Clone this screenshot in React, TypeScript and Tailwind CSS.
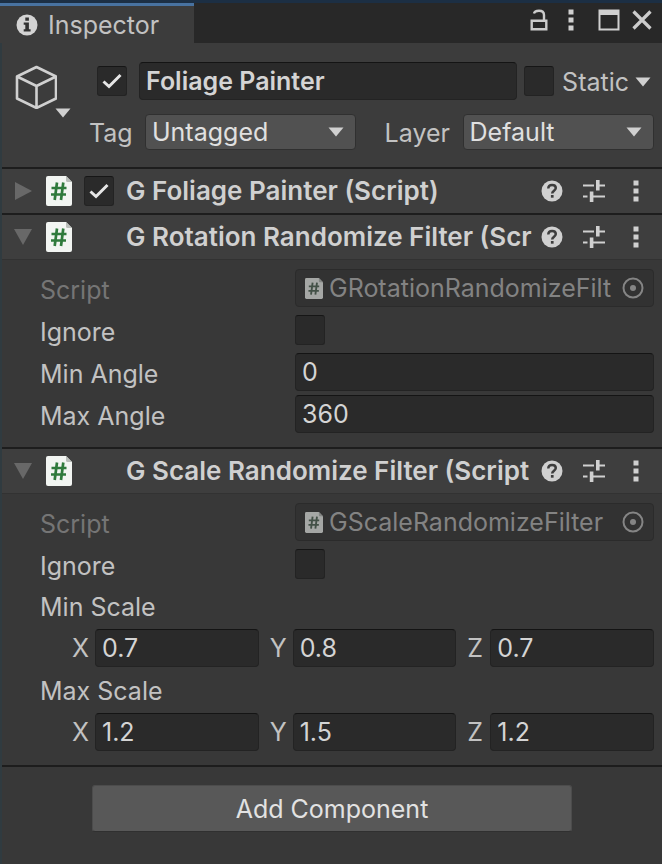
import { useId } from "react";
import type { ReactNode } from "react";

function Caret({ className = "" }: { className?: string }) {
  return (
    <svg viewBox="0 0 16 10" className={`h-[10px] w-4 ${className}`} fill="#d0d0d0" aria-hidden="true">
      <path d="M0.5 0.5h15L8 9.5z" />
    </svg>
  );
}

function Dots() {
  return (
    <svg viewBox="0 0 6 22" className="h-[22px] w-[6px]" fill="#d0d0d0" aria-hidden="true">
      <path d="M0.500 0.500h5v5h-5zM0.500 8.500h5v5h-5zM0.500 16.500h5v5h-5z" />
    </svg>
  );
}

function ScriptIcon({ className, ink = "#2f7a3c" }: { className: string; ink?: string }) {
  return (
    <svg viewBox="0 0 26 30" className={`shrink-0 ${className}`} aria-hidden="true">
      <path d="M2 0h18l6 6v22a2 2 0 0 1-2 2H2a2 2 0 0 1-2-2V2a2 2 0 0 1 2-2z" fill="#f2f5f2" />
      <path d="M20 0v4.500a1.500 1.500 0 0 0 1.500 1.500H26z" fill="#b9bdb9" />
      <path d="M11 6.500L8.700 24M17.300 6.500L15 24M5.500 12h15M5 18.500h15" stroke={ink} strokeWidth="2.700" fill="none" />
    </svg>
  );
}

function Check({ label, id, checked = false }: { label?: string; id?: string; checked?: boolean }) {
  return (
    <span className="relative block size-[30px] shrink-0">
      <input
        type="checkbox"
        id={id}
        aria-label={label}
        defaultChecked={checked}
        className="peer block size-full appearance-none rounded-[3px] border border-[#232323] border-t-[#161616] bg-[#2a2a2a]"
      />
      <svg
        viewBox="0 0 30 30"
        className="pointer-events-none absolute inset-0 hidden peer-checked:block"
        fill="none"
        stroke="#e6e6e6"
        strokeWidth="3"
        aria-hidden="true"
      >
        <path d="M6.500 15.500l5.500 5L23.500 9" />
      </svg>
    </span>
  );
}

const field =
  "h-[38px] w-full min-w-0 rounded-[4px] border border-[#232323] border-t-[#141414] bg-[#2a2a2a] px-[6px] text-[#d4d4d4] outline-none";

function Dropdown({ id, value }: { id: string; value: string }) {
  return (
    <span className="relative block">
      <select
        id={id}
        defaultValue={value}
        className="block h-9 w-full appearance-none rounded-[4px] border border-[#303030] bg-[#515151] pr-8 pl-[6px] text-[#e0e0e0]"
      >
        <option>{value}</option>
      </select>
      <Caret className="pointer-events-none absolute top-[13px] right-3" />
    </span>
  );
}

function ComponentHeader({ title, open, enabled }: { title: string; open: boolean; enabled?: boolean }) {
  return (
    <header className="flex h-11 items-center bg-[#3e3e3e] pr-[23px] pl-3">
      <button type="button" aria-label={open ? "Collapse" : "Expand"} aria-expanded={open} className="mr-[14px] shrink-0">
        <svg viewBox="0 0 18 18" className="size-[18px]" fill="#686868" aria-hidden="true">
          {open ? <path d="M0 1h18L9 17z" /> : <path d="M1 0v18l17-9z" />}
        </svg>
      </button>
      <ScriptIcon className="h-[30px] w-[26px]" />
      <div className="mr-3 ml-3 w-[30px] shrink-0">{enabled && <Check label={`${title} enabled`} checked />}</div>
      <h2 className="min-w-0 flex-1 overflow-hidden text-[26px] font-semibold whitespace-nowrap text-[#d0d0d0]">{title}</h2>
      <div className="flex shrink-0 items-center">
        <button type="button" aria-label="Help" className="mr-5">
          <svg viewBox="0 0 22 22" className="size-[22px]" aria-hidden="true">
            <circle cx="11" cy="11" r="10.500" fill="#d0d0d0" />
            <path
              d="M7.300 8.600c0-2.300 1.600-3.700 3.800-3.700 2.100 0 3.700 1.300 3.700 3.200 0 2.600-3.600 2.700-3.600 5.400"
              fill="none"
              stroke="#3e3e3e"
              strokeWidth="2.500"
            />
            <path d="M9.900 15h2.700v2.700H9.900z" fill="#3e3e3e" />
          </svg>
        </button>
        <button type="button" aria-label="Presets" className="mr-7">
          <svg viewBox="0 0 22 22" className="size-[22px]" fill="#d0d0d0" aria-hidden="true">
            <path d="M0 4.500h11v2H0zM13 0h3.600v10.500H13zM16.500 4.500H22v2h-5.500zM0 15.500h4.500v2H0zM6.800 11.500h3.600V22H6.800zM10.400 15.500H22v2H10.400z" />
          </svg>
        </button>
        <button type="button" aria-label="More">
          <Dots />
        </button>
      </div>
    </header>
  );
}

function Section({ title, enabled, children }: { title: string; enabled?: boolean; children?: ReactNode }) {
  return (
    <section className="border-t-2 border-[#1d1d1d]">
      <ComponentHeader title={title} open={Boolean(children)} enabled={enabled} />
      {children && (
        <div className="flex flex-col gap-1 border-t border-[#323232] pt-[9px] pr-2 pb-[14px] pl-[38px]">{children}</div>
      )}
    </section>
  );
}

function Row({ label, id, dim, children }: { label: string; id: string; dim?: boolean; children: ReactNode }) {
  return (
    <div className="grid h-[38px] grid-cols-[255px_minmax(0,1fr)] items-center">
      <label htmlFor={id} className={dim ? "pt-1 text-[#757575]" : "pt-1"}>
        {label}
      </label>
      {children}
    </div>
  );
}

function ScriptRow({ value }: { value: string }) {
  const id = useId();
  return (
    <Row label="Script" id={id} dim>
      <div className="flex h-[38px] items-center rounded-[4px] border border-[#2b2b2b] bg-[#323232] pr-[9px] pl-[9px]">
        <ScriptIcon className="mr-[6px] h-[21px] w-[18px] opacity-60" ink="#4f6656" />
        <input
          id={id}
          disabled
          defaultValue={value}
          className="min-w-0 flex-1 bg-transparent text-[#838383]"
        />
        <svg viewBox="0 0 22 22" className="size-[22px] shrink-0" aria-hidden="true">
          <circle cx="11" cy="11" r="9.500" fill="none" stroke="#858585" strokeWidth="2" />
          <circle cx="11" cy="11" r="3" fill="#858585" />
        </svg>
      </div>
    </Row>
  );
}

function IgnoreRow() {
  const id = useId();
  return (
    <Row label="Ignore" id={id}>
      <Check id={id} />
    </Row>
  );
}

function NumberRow({ label, value }: { label: string; value: string }) {
  const id = useId();
  return (
    <Row label={label} id={id}>
      <input id={id} inputMode="decimal" defaultValue={value} className={field} />
    </Row>
  );
}

function VectorRow({ label, values }: { label: string; values: [string, string, string] }) {
  return (
    <fieldset>
      <legend className="mb-1 h-[38px] pt-1">{label}</legend>
      <div className="grid grid-cols-3 gap-[11px] pl-8">
        {["X", "Y", "Z"].map((axis, i) => (
          <label key={axis} className="flex items-center">
            <span className="w-[23px] shrink-0">{axis}</span>
            <input inputMode="decimal" defaultValue={values[i]} className={field} />
          </label>
        ))}
      </div>
    </fieldset>
  );
}

export default function App() {
  return (
    <main className="min-h-screen border-l-2 border-[#303b40] bg-[#383838] font-['Inter',sans-serif] text-[25px] leading-8 text-[#c2c2c2]">
      <div className="-ml-[2px] flex h-[43px] border-t-[3px] border-[#1c2f44] bg-[#282828]">
        <div className="flex w-[194px] items-center border-t-[3px] border-[#4872a0] bg-[#3c3c3c] pl-4">
          <svg viewBox="0 0 22 22" className="mr-[10px] size-[22px] shrink-0" aria-hidden="true">
            <circle cx="11" cy="11" r="10.500" fill="#d4d4d4" />
            <path d="M9.300 3.500h3.600v3.300H9.300zM7.700 8.500h5.200v6.700h1.700v2.300H7.700v-2.300h1.600v-4.400H7.700z" fill="#333333" />
          </svg>
          <h1>Inspector</h1>
        </div>
        <div className="ml-auto flex items-center pr-[10px] pb-[6px]">
          <button type="button" aria-label="Lock" className="mr-5">
            <svg viewBox="0 0 18 22" className="h-[22px] w-[18px]" fill="none" stroke="#cccccc" strokeWidth="2.400" aria-hidden="true">
              <path d="M1.700 11.700h14.600v8.600H1.700zM4 4.500Q4.500 1.700 9 1.700q5 0 5 4.300v5.500" />
            </svg>
          </button>
          <button type="button" aria-label="More" className="mr-6">
            <Dots />
          </button>
          <button type="button" aria-label="Maximize" className="mr-3">
            <svg viewBox="0 0 22 22" className="size-[22px]" aria-hidden="true">
              <path d="M1.500 1.500h19v19h-19z" fill="none" stroke="#d0d0d0" strokeWidth="2" />
              <path d="M1 1h20v5H1z" fill="#d0d0d0" />
            </svg>
          </button>
          <button type="button" aria-label="Close">
            <svg viewBox="0 0 20 20" className="size-5" fill="none" stroke="#cccccc" strokeWidth="3.200" aria-hidden="true">
              <path d="M1.500 1.500l17 17M18.500 1.500l-17 17" />
            </svg>
          </button>
        </div>
      </div>

      <div className="flex bg-[#3c3c3c] pt-[19px] pr-2 pb-[17px] pl-[13px]">
        <button type="button" aria-label="Object icon" className="flex w-[74px] shrink-0 items-start pt-[3px]">
          <svg viewBox="0 0 42 44" className="h-11 w-[42px]" fill="none" stroke="#d0d0d0" strokeWidth="2.600" strokeLinejoin="round" aria-hidden="true">
            <path d="M21.500 2l19.500 9.500v22L21.500 43 2 33.500v-22zM2 11.500L21.500 21 41 11.500M21.500 21v22" />
          </svg>
          <Caret className="mt-[43px] -ml-[2px] shrink-0" />
        </button>
        <div className="min-w-0 flex-1">
          <div className="flex items-center pr-[3px] pl-2">
            <Check label="Active" checked />
            <input aria-label="Name" defaultValue="Foliage Painter" className={`${field} mr-[7px] ml-3 flex-1 font-semibold`} />
            <Check label="Static" />
            <button type="button" className="ml-2 flex shrink-0 items-center gap-[6px] pt-[2px]">
              Static
              <Caret />
            </button>
          </div>
          <div className="mt-[14px] flex items-center">
            <label htmlFor="tag" className="w-14 shrink-0 pt-[2px]">
              Tag
            </label>
            <div className="min-w-0 flex-11">
              <Dropdown id="tag" value="Untagged" />
            </div>
            <label htmlFor="layer" className="ml-[29px] w-[78px] shrink-0 pt-[2px]">
              Layer
            </label>
            <div className="min-w-0 flex-10">
              <Dropdown id="layer" value="Default" />
            </div>
          </div>
        </div>
      </div>

      <Section title="G Foliage Painter (Script)" enabled />
      <Section title="G Rotation Randomize Filter (Scr">
        <ScriptRow value="GRotationRandomizeFilt" />
        <IgnoreRow />
        <NumberRow label="Min Angle" value="0" />
        <NumberRow label="Max Angle" value="360" />
      </Section>
      <Section title="G Scale Randomize Filter (Script">
        <ScriptRow value="GScaleRandomizeFilter" />
        <IgnoreRow />
        <VectorRow label="Min Scale" values={["0.7", "0.8", "0.7"]} />
        <VectorRow label="Max Scale" values={["1.2", "1.5", "1.2"]} />
      </Section>

      <footer className="border-t-2 border-[#1d1d1d] px-[90px] pt-[18px] pb-[31px]">
        <button type="button" className="h-[47px] w-full rounded-[3px] border border-[#4c4c4c] border-b-[#303030] bg-[#585858] text-[#e2e2e2]">
          Add Component
        </button>
      </footer>
    </main>
  );
}
